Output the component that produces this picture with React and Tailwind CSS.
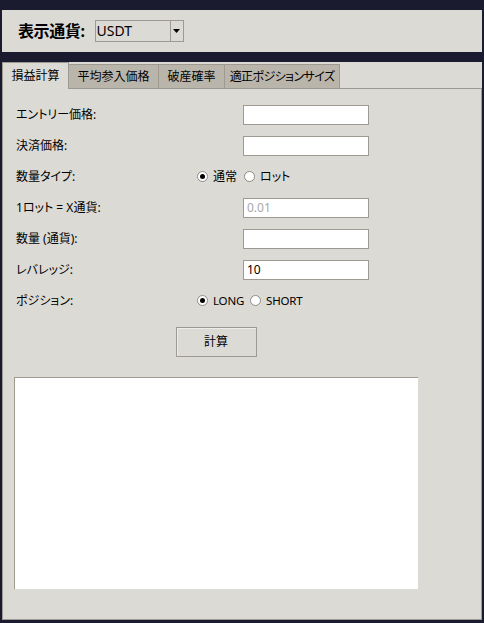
import React from "react";

const FONT =
  "font-['Noto_Sans','Noto_Sans_CJK_JP',sans-serif] [font-feature-settings:'palt']";

function Radio({ checked, label, small = false }) {
  return (
    <span className="flex items-center">
      <span className="w-[11px] h-[11px] rounded-full border border-[#8f8c86] bg-white flex items-center justify-center">
        {checked && <span className="w-[5px] h-[5px] rounded-full bg-black" />}
      </span>
      <span
        className={`ml-[5px] leading-none ${
          small ? "text-[11.5px] tracking-[-0.2px]" : "text-[12px]"
        }`}
      >
        {label}
      </span>
    </span>
  );
}

function Entry({ value = "", muted = false }) {
  return (
    <div
      className={`ml-auto w-[126px] h-[20px] border border-[#9e9a91] bg-white pl-[3px] text-[12px] leading-[18px] ${
        muted ? "text-[#a8a8a8]" : "text-black"
      }`}
    >
      {value}
    </div>
  );
}

function Row({ label, children }) {
  return (
    <div className="flex items-center h-[31px]">
      <div className="w-[183px] pl-[2px] text-[12px] leading-none">{label}</div>
      <div className="w-[172px] flex items-center">{children}</div>
    </div>
  );
}

const tabs = [
  { text: "損益計算", w: "w-[67px]", extra: "" },
  { text: "平均参入価格", w: "w-[91px]", extra: "" },
  { text: "破産確率", w: "w-[67px]", extra: "" },
  { text: "適正ポジションサイズ", w: "w-[116px]", extra: "tracking-[-0.6px]" },
];

export default function App() {
  return (
    <div
      className={`w-[484px] h-[623px] bg-[#1b1b2f] pt-[10px] px-[2px] pb-[3px] flex flex-col text-black ${FONT}`}
    >
      {/* currency selector bar */}
      <div className="h-[42px] shrink-0 bg-[#dcdad5] flex items-center pl-[16px]">
        <span className="text-[16px] font-bold leading-none tracking-[-0.4px]">表示通貨:</span>
        <div className="ml-[10px] w-[89px] h-[22px] border border-[#9e9a91] bg-[#dcdad5] flex">
          <span className="flex-1 pl-[1px] text-[14px] leading-[20px]">USDT</span>
          <span className="w-[13px] border-l border-[#9e9a91] flex items-center justify-center">
            <svg width="7" height="4" viewBox="0 0 7 4">
              <polygon points="0,0 7,0 3.5,4" fill="#000" />
            </svg>
          </span>
        </div>
      </div>

      <div className="h-[10px] shrink-0" />

      {/* notebook */}
      <div className="flex-1 bg-[#dcdad5] flex flex-col">
        <div className="h-[26px] shrink-0 flex items-end">
          {tabs.map((t, i) =>
            i === 0 ? (
              <div
                key={t.text}
                className={`${t.w} h-[27px] -mb-px relative z-10 bg-[#dcdad5] border-l border-t border-r border-[#9e9a91] flex items-center justify-center text-[12px] leading-none`}
              >
                {t.text}
              </div>
            ) : (
              <div
                key={t.text}
                className={`${t.w} ${t.extra} -ml-px h-[24px] bg-[#bab5ab] border-l border-t border-r border-[#9e9a91] flex items-center justify-center text-[12px] leading-none`}
              >
                {t.text}
              </div>
            )
          )}
        </div>

        <div className="flex-1 border border-[#9e9a91] pt-[10px] pl-[11px]">
          <div className="w-[404px] flex flex-col">
            <Row label="エントリー価格:">
              <Entry />
            </Row>
            <Row label="決済価格:">
              <Entry />
            </Row>
            <Row label="数量タイプ:">
              <Radio checked label="通常" />
              <span className="w-[7px]" />
              <Radio label="ロット" />
            </Row>
            <Row label="1ロット = X通貨:">
              <Entry value="0.01" muted />
            </Row>
            <Row label="数量 (通貨):">
              <Entry />
            </Row>
            <Row label="レバレッジ:">
              <Entry value="10" />
            </Row>
            <Row label="ポジション:">
              <Radio checked small label="LONG" />
              <span className="w-[6px]" />
              <Radio small label="SHORT" />
            </Row>

            <button className="mt-[11px] mx-auto w-[81px] h-[30px] border border-[#9e9a91] bg-[#dcdad5] shadow-[inset_1px_1px_0_#eeece8] text-[12px] leading-none">
              計算
            </button>

            <div className="mt-[20px] w-[404px] h-[212px] bg-white border-t border-l border-[#9e9a91] border-r-white border-b-white" />
          </div>
        </div>
      </div>
    </div>
  );
}
